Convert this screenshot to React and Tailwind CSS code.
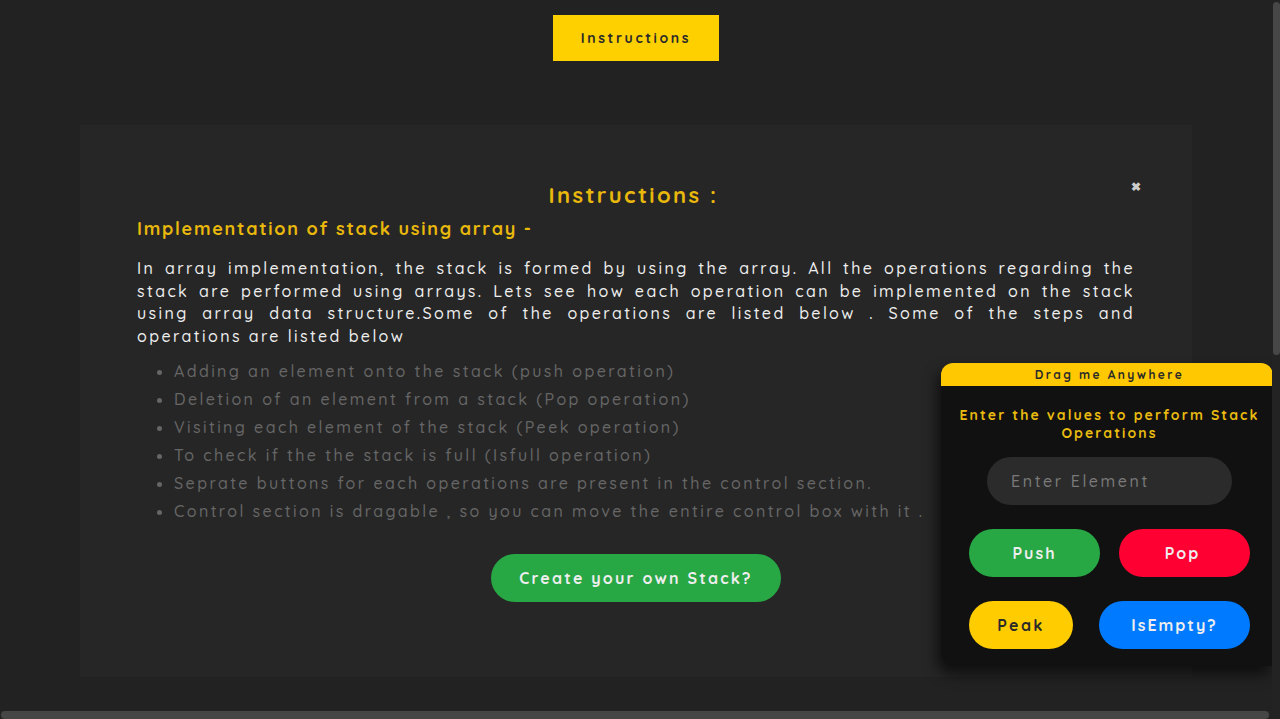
// pagina de instructiuni pentru stiva + caseta de control
const FONT = { fontFamily: '"Quicksand", "Noto Sans", "Open Sans", sans-serif' }

const paragraphLines = [
  'In array implementation, the stack is formed by using the array. All the operations regarding the',
  'stack are performed using arrays. Lets see how each operation can be implemented on the stack',
  'using array data structure.Some of the operations are listed below . Some of the steps and',
]

const items = [
  'Adding an element onto the stack (push operation)',
  'Deletion of an element from a stack (Pop operation)',
  'Visiting each element of the stack (Peek operation)',
  'To check if the the stack is full (Isfull operation)',
  'Seprate buttons for each operations are present in the control section.',
  'Control section is dragable , so you can move the entire control box with it .',
]

function ControlBox() {
  return (
    <div className="absolute left-[941px] top-[363px] w-[332px] rounded-t-[12px] rounded-bl-[14px] bg-[#111111] shadow-[-4px_8px_14px_rgba(0,0,0,0.6)]">
      <div className="h-[23px] rounded-t-[12px] bg-[#ffc800] pl-[5px] text-center text-[12px] font-bold leading-[23px] tracking-[2.4px] text-[#2a2a2a]">
        Drag me Anywhere
      </div>
      <div className="w-[337px] px-[14px] pt-[20px] pb-[17px]">
        <p className="text-center text-[14px] font-bold leading-[18px] tracking-[2.1px] text-[#e9bb10]">
          Enter the values to perform Stack Operations
        </p>
        <div className="mt-[15px] flex justify-center">
          <input
            placeholder="Enter Element"
            className="h-[48px] w-[245px] rounded-full bg-[#2b2b2b] px-[24px] text-[16px] font-medium tracking-[2.6px] text-white placeholder-[#7a7a7a] outline-none"
            style={FONT}
          />
        </div>
        <div className="mt-[24px] flex justify-between px-[14px]">
          <button className="h-[48px] w-[131px] rounded-full bg-[#28a745] text-[16px] font-bold tracking-[2px] text-[#eeeeee]" style={FONT}>Push</button>
          <button className="h-[48px] w-[131px] rounded-full bg-[#ff0033] pr-[4px] text-[16px] font-bold tracking-[2px] text-[#eeeeee]" style={FONT}>Pop</button>
        </div>
        <div className="mt-[24px] flex justify-between px-[14px]">
          <button className="h-[48px] w-[104px] rounded-full bg-[#ffcc00] text-[16px] font-bold tracking-[2.4px] text-[#2a2a2a]" style={FONT}>Peak</button>
          <button className="h-[48px] w-[151px] rounded-full bg-[#007bff] text-[16px] font-bold tracking-[2px] text-[#eeeeee]" style={FONT}>IsEmpty?</button>
        </div>
      </div>
    </div>
  )
}

export default function App() {
  return (
    <div className="relative h-[719px] w-[1280px] overflow-hidden bg-[#222222]" style={FONT}>
      {/* buton sus */}
      <div className="flex justify-center pt-[15px]">
        <button className="ml-[-8px] h-[46px] w-[166px] bg-[#ffd000] text-[14px] font-bold tracking-[2.6px] text-[#2a2a2a]" style={FONT}>
          Instructions
        </button>
      </div>

      {/* panou instructiuni */}
      <div className="mx-[80px] mt-[64px] h-[552px] w-[1112px] bg-[#262626] px-[57px] pt-[55px]">
        <div className="relative">
          <h2 className="pr-[5px] text-center text-[22px] font-bold leading-[30px] tracking-[2.4px] text-[#e9b80c]">Instructions :</h2>
          <span className="absolute right-[-6px] top-[-2px] text-[12px] font-bold text-[#cccccc]">✖</span>
        </div>
        <h3 className="mt-[7px] text-[18px] font-bold leading-[24px] tracking-[1.75px] text-[#e9b80c]">
          Implementation of stack using array -
        </h3>
        <div className="mt-[16px] text-[16px] font-medium leading-[22.7px] tracking-[2.4px] text-[#eeeeee]">
          {paragraphLines.map((l) => (
            <div key={l} className="text-justify [text-align-last:justify]">{l}</div>
          ))}
          <div>operations are listed below</div>
        </div>
        <ul className="mt-[9px] list-disc pl-[37px] text-[16px] font-medium leading-[28px] tracking-[2.4px] text-[#666666]">
          {items.map((t) => (
            <li key={t}>{t}</li>
          ))}
        </ul>
        <div className="mt-[29px] flex justify-center">
          <button className="h-[48px] w-[290px] rounded-full bg-[#28a745] text-[16px] font-bold tracking-[2.2px] text-[#eeeeee]" style={FONT}>
            Create your own Stack?
          </button>
        </div>
      </div>

      <ControlBox />

      {/* scrollbar-uri */}
      <div className="absolute right-0 top-0 h-[711px] w-[8px] bg-[#232323]">
        <div className="mx-auto mt-[2px] h-[353px] w-[7px] rounded-full bg-[#474747]" />
      </div>
      <div className="absolute bottom-0 left-0 h-[8px] w-[1280px] bg-[#232323]">
        <div className="ml-[1px] h-[8px] w-[1268px] rounded-full bg-[#464646]" />
      </div>
    </div>
  )
}
